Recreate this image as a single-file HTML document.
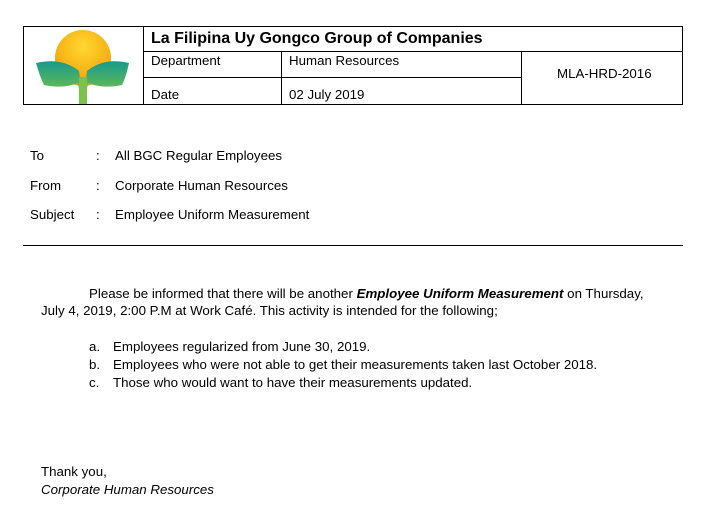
<!DOCTYPE html>
<html><head><meta charset="utf-8"><style>
body{margin:0;width:725px;height:518px;background:#fff;font-family:"Liberation Sans",sans-serif;font-size:13.3px;color:#000;position:relative;overflow:hidden}
.a{position:absolute;white-space:nowrap}
.l{position:absolute;background:#000}
</style></head><body>
<div class="l" style="left:23px;top:26px;width:660px;height:1px"></div>
<div class="l" style="left:23px;top:104px;width:660px;height:1px"></div>
<div class="l" style="left:23px;top:26px;width:1px;height:79px"></div>
<div class="l" style="left:682px;top:26px;width:1px;height:79px"></div>
<div class="l" style="left:143px;top:26px;width:1px;height:79px"></div>
<div class="l" style="left:143px;top:51px;width:540px;height:1px"></div>
<div class="l" style="left:143px;top:77px;width:378px;height:1px"></div>
<div class="l" style="left:281px;top:51px;width:1px;height:54px"></div>
<div class="l" style="left:521px;top:51px;width:1px;height:54px"></div>
<svg class="a" style="left:24px;top:27px" width="119" height="77" viewBox="0 0 119 77">
<defs><radialGradient id="s" cx="0.5" cy="0.3" r="0.65"><stop offset="0" stop-color="#ffd830"/><stop offset="1" stop-color="#f4a20c"/></radialGradient>
<linearGradient id="g" x1="0" y1="0" x2="0" y2="1"><stop offset="0" stop-color="#17998c"/><stop offset="0.6" stop-color="#5db85a"/><stop offset="1" stop-color="#9ccc3c"/></linearGradient></defs>
<circle cx="59" cy="31" r="28" fill="url(#s)"/>
<path d="M12 36 Q38 30 55 44 Q57 56 56 77 L62 77 Q61 56 63 44 Q80 30 105 36 Q102 50 98 58 Q78 62 64 56 Q62 66 62 77 L56 77 Q56 66 54 56 Q40 62 20 58 Q16 50 12 36Z" fill="url(#g)"/>
<rect x="55" y="50" width="8" height="27" fill="#7cc24a"/>
</svg>
<div class="a" style="left:151px;top:30px;font-size:16px;font-weight:bold">La Filipina Uy Gongco Group of Companies</div>
<div class="a" style="left:151px;top:53px">Department</div>
<div class="a" style="left:289px;top:53px">Human Resources</div>
<div class="a" style="left:557px;top:66px">MLA-HRD-2016</div>
<div class="a" style="left:151px;top:87px">Date</div>
<div class="a" style="left:289px;top:87px">02 July 2019</div>
<div class="a" style="left:30px;top:148px">To</div><div class="a" style="left:96px;top:148px">:</div><div class="a" style="left:115px;top:148px">All BGC Regular Employees</div>
<div class="a" style="left:30px;top:178px">From</div><div class="a" style="left:96px;top:178px">:</div><div class="a" style="left:115px;top:178px">Corporate Human Resources</div>
<div class="a" style="left:30px;top:207px">Subject</div><div class="a" style="left:96px;top:207px">:</div><div class="a" style="left:115px;top:207px">Employee Uniform Measurement</div>
<div class="l" style="left:23px;top:245px;width:660px;height:1px"></div>
<div class="a" style="left:89px;top:286px">Please be informed that there will be another <b><i>Employee Uniform Measurement</i></b> on Thursday,</div>
<div class="a" style="left:41px;top:303px">July 4, 2019, 2:00 P.M at Work Café. This activity is intended for the following;</div>
<div class="a" style="left:89px;top:339px">a.</div><div class="a" style="left:113px;top:339px">Employees regularized from June 30, 2019.</div>
<div class="a" style="left:89px;top:357px">b.</div><div class="a" style="left:113px;top:357px">Employees who were not able to get their measurements taken last October 2018.</div>
<div class="a" style="left:89px;top:375px">c.</div><div class="a" style="left:113px;top:375px">Those who would want to have their measurements updated.</div>
<div class="a" style="left:41px;top:464px">Thank you,</div>
<div class="a" style="left:41px;top:482px;font-style:italic">Corporate Human Resources</div>
</body></html>
